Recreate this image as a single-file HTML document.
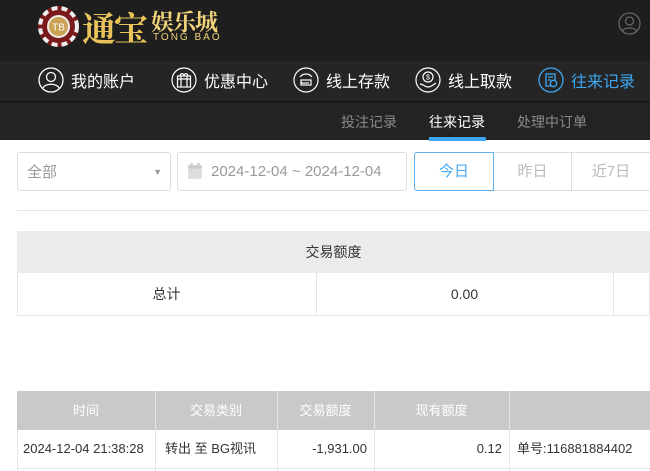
<!DOCTYPE html>
<html><head><meta charset="utf-8"><style>
*{margin:0;padding:0;box-sizing:border-box}
body{width:650px;height:471px;overflow:hidden;background:#fff;font-family:"Liberation Sans","Noto Sans CJK SC",sans-serif;position:relative}
.abs{position:absolute}
#hdr{left:0;top:0;width:650px;height:61px;background:#1e1e1e}
#nav{left:0;top:61px;width:650px;height:41px;background:#252525;border-bottom:1px solid #111}
#sub{left:0;top:102px;width:650px;height:38px;background:#232323}
.ni{position:absolute;top:7px;height:26px;display:flex;align-items:center;color:#fff;font-size:16px}
.ni svg{margin-right:7px}
.st{position:absolute;top:112px;font-size:14px;color:#8a8a8a}
.box{position:absolute;border:1px solid #ddd;border-radius:3px;height:39px;top:152px;font-size:15px;color:#999;display:flex;align-items:center;white-space:nowrap}
.c{position:absolute;font-size:13px;color:#333;line-height:38px;white-space:nowrap}
.h{position:absolute;top:391px;text-align:center;line-height:39px;font-size:13px;color:#fff}
.v{position:absolute;top:391px;width:1px;height:80px;background:#e6e6e6}
</style></head><body>
<div id="hdr" class="abs"></div>
<svg class="abs" style="left:37px;top:5px" width="43" height="43" viewBox="0 0 43 43">
<circle cx="21.5" cy="21.5" r="20.5" fill="#7a1a1a"/>
<circle cx="21.5" cy="21.5" r="18.5" fill="none" stroke="#eee" stroke-width="4" stroke-dasharray="6 4"/>
<circle cx="21.5" cy="21.5" r="10.5" fill="#c9a253" stroke="#eee" stroke-width="2"/>
<text x="21.5" y="25.5" font-size="10" text-anchor="middle" fill="#fff" font-family="Liberation Sans">TB</text>
</svg>
<div class="abs" style="left:82px;top:2px;font-size:34px;color:#e8c45a;font-family:'Noto Serif CJK SC',serif;font-weight:bold;letter-spacing:-2px">通宝</div>
<div class="abs" style="left:151px;top:4px;font-size:23px;color:#efd27a;font-family:'Noto Serif CJK SC',serif;font-weight:bold;letter-spacing:-1px">娱乐城</div>
<div class="abs" style="left:153px;top:32px;font-size:10px;color:#efd27a;letter-spacing:2px">TONG BAO</div>
<svg class="abs" style="left:618px;top:12px" width="23" height="23" viewBox="0 0 23 23" fill="none" stroke="#666" stroke-width="1.3"><circle cx="11.5" cy="11.5" r="10.5"/><circle cx="11.5" cy="9" r="4"/><path d="M4.5 19c2-4 12-4 14 0"/></svg>
<div id="nav" class="abs"></div>
<div class="ni" style="left:38px;top:67px"><svg width="26" height="26" viewBox="0 0 26 26" fill="none" stroke="#fff" stroke-width="1.3"><circle cx="13" cy="13" r="12"/><circle cx="13" cy="10" r="4.5"/><path d="M5 21c2-5 14-5 16 0"/></svg>我的账户</div>
<div class="ni" style="left:171px;top:67px"><svg width="26" height="26" viewBox="0 0 26 26" fill="none" stroke="#fff" stroke-width="1.2"><circle cx="13" cy="13" r="12"/><rect x="6.5" y="9" width="13" height="11"/><path d="M6.5 12h13M10 9v11M16 9v11M9 9c0-3 4-3 4 0c0-3 4-3 4 0"/></svg>优惠中心</div>
<div class="ni" style="left:293px;top:67px"><svg width="26" height="26" viewBox="0 0 26 26" fill="none" stroke="#fff" stroke-width="1.2"><circle cx="13" cy="13" r="12"/><rect x="8" y="13" width="10" height="5"/><path d="M7 10c3-4 9-4 12 0M9 15v2M11 15v2M13 15v2M15 15v2"/></svg>线上存款</div>
<div class="ni" style="left:415px;top:67px"><svg width="26" height="26" viewBox="0 0 26 26" fill="none" stroke="#fff" stroke-width="1.2"><circle cx="13" cy="13" r="12"/><circle cx="13" cy="10" r="5"/><text x="13" y="12.5" font-size="7" text-anchor="middle" fill="#fff" stroke="none">$</text><path d="M5 17c3 0 5 3 8 3s5-2 8-4"/></svg>线上取款</div>
<div class="ni" style="left:538px;top:67px;color:#3ea6f0"><svg width="26" height="26" viewBox="0 0 26 26" fill="none" stroke="#3ea6f0" stroke-width="1.3"><circle cx="13" cy="13" r="12"/><rect x="8" y="7" width="9" height="12"/><circle cx="15.5" cy="16.5" r="3.2" fill="#252525"/><path d="M10 10h5M10 13h3"/></svg>往来记录</div>
<div id="sub" class="abs"></div>
<div class="st" style="left:341px">投注记录</div>
<div class="st" style="left:429px;color:#fff">往来记录</div>
<div class="st" style="left:517px">处理中订单</div>
<div class="abs" style="left:429px;top:137px;width:57px;height:4px;background:#3ea6f0"></div>
<div class="box" style="left:17px;width:154px;padding-left:9px">全部<span style="position:absolute;right:8px;top:14px;font-size:9px;color:#999">▼</span></div>
<div class="box" style="left:177px;width:230px;padding-left:9px"><svg width="16" height="17" viewBox="0 0 14 15" style="margin-right:8px"><rect x="1" y="2" width="12" height="12" fill="#ddd"/><rect x="1" y="2" width="12" height="3" fill="#ccc"/><rect x="3" y="0" width="2" height="4" fill="#ccc"/><rect x="9" y="0" width="2" height="4" fill="#ccc"/></svg>2024-12-04 ~ 2024-12-04</div>
<div class="box" style="left:414px;width:246px;border-radius:3px 0 0 3px"></div>
<div class="abs" style="left:414px;top:152px;width:80px;height:39px;border:1px solid #5fb4f0;border-radius:3px 0 0 3px;color:#4aa8f0;font-size:15px;text-align:center;line-height:37px">今日</div>
<div class="abs" style="left:494px;top:153px;width:78px;height:37px;border-right:1px solid #ddd;color:#bbb;font-size:15px;text-align:center;line-height:37px">昨日</div>
<div class="abs" style="left:572px;top:153px;width:78px;height:37px;color:#bbb;font-size:15px;text-align:center;line-height:37px">近7日</div>
<div class="abs" style="left:17px;top:210px;width:633px;height:1px;background:#e6e6e6"></div>
<div class="abs" style="left:17px;top:231px;width:633px;height:42px;background:#ebebeb;font-size:14px;color:#333;text-align:center;line-height:42px">交易额度</div>
<div class="abs" style="left:17px;top:273px;width:633px;height:43px;border:1px solid #e6e6e6;border-top:none"></div>
<div class="abs" style="left:316px;top:273px;width:1px;height:42px;background:#e6e6e6"></div>
<div class="abs" style="left:613px;top:273px;width:1px;height:42px;background:#e6e6e6"></div>
<div class="abs" style="left:17px;top:273px;width:299px;text-align:center;line-height:42px;font-size:14px;color:#333">总计</div>
<div class="abs" style="left:316px;top:273px;width:297px;text-align:center;line-height:42px;font-size:14px;color:#333">0.00</div>
<div class="abs" style="left:17px;top:391px;width:633px;height:39px;background:#c9c9c9"></div>
<div class="abs" style="left:17px;top:430px;width:633px;height:41px;border-left:1px solid #e6e6e6"></div>
<div class="abs" style="left:17px;top:468px;width:633px;height:1px;background:#e6e6e6"></div>
<div class="v" style="left:155px"></div>
<div class="v" style="left:277px"></div>
<div class="v" style="left:374px"></div>
<div class="v" style="left:509px"></div>
<div class="h" style="left:17px;width:138px">时间</div>
<div class="h" style="left:155px;width:122px">交易类别</div>
<div class="h" style="left:277px;width:97px">交易额度</div>
<div class="h" style="left:374px;width:135px">现有额度</div>
<div class="c" style="left:23px;top:430px">2024-12-04 21:38:28</div>
<div class="c" style="left:165px;top:430px">转出 至 BG视讯</div>
<div class="c" style="left:277px;top:430px;width:90px;text-align:right">-1,931.00</div>
<div class="c" style="left:374px;top:430px;width:128px;text-align:right">0.12</div>
<div class="c" style="left:517px;top:430px">单号:116881884402</div>
</body></html>
